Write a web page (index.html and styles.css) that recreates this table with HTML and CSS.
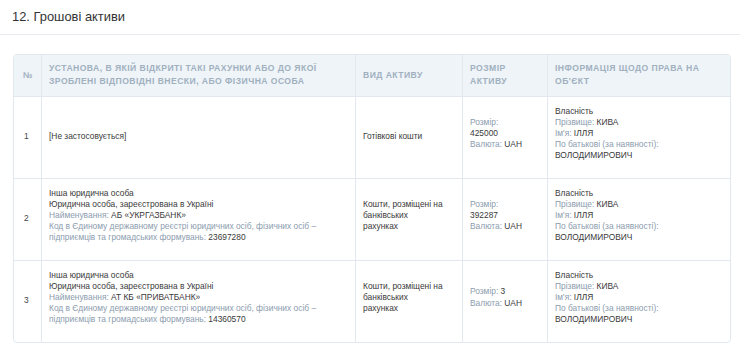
FILE: index.html
```html
<!DOCTYPE html>
<html lang="uk">
<head>
<meta charset="utf-8">
<link rel="stylesheet" href="styles.css">
</head>
<body>
<div class="section-head">12. Грошові активи</div>
<div class="wrap">
<table class="assets">
<colgroup>
<col class="c-num"><col class="c-inst"><col class="c-type"><col class="c-size"><col class="c-right">
</colgroup>
<thead>
<tr>
<th class="num">№</th>
<th>Установа, в якій відкриті такі рахунки або до якої зроблені відповідні внески, або фізична особа</th>
<th>Вид активу</th>
<th>Розмір активу</th>
<th>Інформація щодо права на об'єкт</th>
</tr>
</thead>
<tbody>
<tr>
<td class="num">1</td>
<td class="one">[Не застосовується]</td>
<td class="type one">Готівкові кошти</td>
<td class="size"><span class="lbl">Розмір:</span> 425000<br><span class="lbl">Валюта:</span> UAH</td>
<td>Власність<br><span class="lbl">Прізвище:</span> КИВА<br><span class="lbl">Ім'я:</span> ІЛЛЯ<br><span class="lbl">По батькові (за наявності):</span> ВОЛОДИМИРОВИЧ</td>
</tr>
<tr>
<td class="num">2</td>
<td>Інша юридична особа<br>Юридична особа, зареєстрована в Україні<br><span class="lbl">Найменування:</span> АБ «УКРГАЗБАНК»<br><span class="lbl">Код в Єдиному державному реєстрі юридичних осіб, фізичних осіб – підприємців та громадських формувань:</span> 23697280</td>
<td class="type">Кошти, розміщені на банківських рахунках</td>
<td class="size"><span class="lbl">Розмір:</span> 392287<br><span class="lbl">Валюта:</span> UAH</td>
<td>Власність<br><span class="lbl">Прізвище:</span> КИВА<br><span class="lbl">Ім'я:</span> ІЛЛЯ<br><span class="lbl">По батькові (за наявності):</span> ВОЛОДИМИРОВИЧ</td>
</tr>
<tr>
<td class="num">3</td>
<td>Інша юридична особа<br>Юридична особа, зареєстрована в Україні<br><span class="lbl">Найменування:</span> АТ КБ «ПРИВАТБАНК»<br><span class="lbl">Код в Єдиному державному реєстрі юридичних осіб, фізичних осіб – підприємців та громадських формувань:</span> 14360570</td>
<td class="type">Кошти, розміщені на банківських рахунках</td>
<td class="size"><span class="lbl">Розмір:</span> 3<br><span class="lbl">Валюта:</span> UAH</td>
<td>Власність<br><span class="lbl">Прізвище:</span> КИВА<br><span class="lbl">Ім'я:</span> ІЛЛЯ<br><span class="lbl">По батькові (за наявності):</span> ВОЛОДИМИРОВИЧ</td>
</tr>
</tbody>
</table>
</div>
</body>
</html>
```
FILE: styles.css
```css
html, body {
  margin: 0;
  padding: 0;
  background: #fff;
}
body {
  font-family: "Liberation Sans", Arial, sans-serif;
  color: #333;
}
.section-head {
  height: 34px;
  line-height: 33px;
  padding-left: 12px;
  font-size: 12.9px;
  color: #333;
  border-bottom: 1px solid #e8ebef;
}
.wrap {
  padding: 19px 9px 0 13px;
}
.assets {
  width: 718px;
  table-layout: fixed;
  border-collapse: separate;
  border-spacing: 0;
  border: 1px solid #e2e8ee;
  border-radius: 4px;
  overflow: hidden;
  font-size: 8.4px;
  line-height: 11.2px;
}
.c-num { width: 27px; }
.c-inst { width: 314px; }
.c-type { width: 107px; }
.c-size { width: 85px; }
.assets th {
  background: #eff4f8;
  color: #a0b0bf;
  font-size: 8.6px;
  font-weight: bold;
  text-transform: uppercase;
  letter-spacing: 0.45px;
  text-align: left;
  line-height: 13.3px;
  padding: 7px 20px 7px 7px;
  vertical-align: middle;
  border-left: 1px solid #e2e8ee;
}
.assets th:first-child,
.assets td:first-child {
  border-left: none;
}
.assets th.num {
  text-align: center;
  padding: 7px 0;
  letter-spacing: 0;
}
.assets td {
  padding: 9px 8px 16px 7px;
  vertical-align: middle;
  border-top: 1px solid #e2e8ee;
  border-left: 1px solid #e2e8ee;
  color: #3a3a3a;
}
.assets td.one {
  padding-top: 12px;
  padding-bottom: 13px;
}
.assets td.num {
  padding: 12px 2px 13px 10px;
  color: #444;
}
.assets td.type {
  padding-right: 17px;
}
.assets td.size {
  padding-right: 22px;
}
.lbl {
  color: #8c9cae;
}
```
